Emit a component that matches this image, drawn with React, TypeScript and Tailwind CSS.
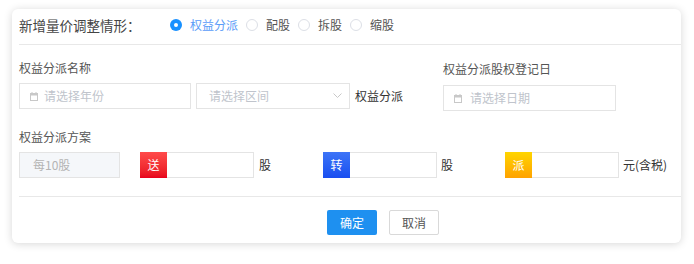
import React from "react";

const font = { fontFamily: '"Noto Sans CJK SC", "Noto Sans", sans-serif' };

function Radio({ checked, label }: { checked?: boolean; label: string }) {
  return (
    <div className="flex items-center">
      {checked ? (
        <span className="w-[12px] h-[12px] rounded-full bg-[#1890ff] flex items-center justify-center">
          <span className="w-[4px] h-[4px] rounded-full bg-white" />
        </span>
      ) : (
        <span className="w-[12px] h-[12px] rounded-full border border-[#dcdfe6] bg-white" />
      )}
      <span className={`ml-[8px] text-[12px] leading-[16px] ${checked ? "text-[#5a9cf8]" : "text-[#555]"}`}>{label}</span>
    </div>
  );
}

function CalIcon() {
  return (
    <svg width="8" height="9" viewBox="0 0 8 9" className="shrink-0">
      <rect x="0.5" y="1.5" width="7" height="7" fill="none" stroke="#c8c8c8" strokeWidth="1" />
      <rect x="0.5" y="1.5" width="7" height="2" fill="#c8c8c8" />
      <line x1="2" y1="0" x2="2" y2="2" stroke="#c8c8c8" />
      <line x1="6" y1="0" x2="6" y2="2" stroke="#c8c8c8" />
    </svg>
  );
}

function Prefixed({ label, cls }: { label: string; cls: string }) {
  return (
    <div className="flex h-[26px] w-[114px] border border-[#e4e4e4] bg-white">
      <div className={`w-[27px] -my-[1px] -ml-[1px] h-[26px] flex items-center justify-center text-white text-[12px] ${cls}`}>{label}</div>
    </div>
  );
}

export default function App() {
  return (
    <div className="w-[694px] h-[264px] bg-white pt-[9px] pl-[12px]" style={font}>
      <div className="w-[669px] h-[234px] bg-white rounded-[6px] shadow-[0_1px_8px_rgba(0,0,0,0.16)] flex flex-col">
        {/* header */}
        <div className="h-[35px] pb-[3px] pl-[7px] flex items-center">
          <span className="w-[151px] text-[13.5px] text-[#444] leading-[16px]">新增量价调整情形：</span>
          <div className="flex items-center gap-[8px]">
            <Radio checked label="权益分派" />
            <Radio label="配股" />
            <Radio label="拆股" />
            <Radio label="缩股" />
          </div>
        </div>
        <div className="ml-[7px] h-[1px] bg-[#e8e8e8]" />

        {/* section 1 */}
        <div className="pl-[7px] h-[64px] flex items-start">
          <div className="w-[424px] flex flex-col">
            <div className="mt-[15px] text-[12px] leading-[16px] text-[#555]">权益分派名称</div>
            <div className="mt-[7px] flex items-center">
              <div className="w-[172px] h-[26px] border border-[#e4e4e4] flex items-center pl-[10px]">
                <CalIcon />
                <span className="ml-[6px] text-[12px] text-[#c0c4cc]">请选择年份</span>
              </div>
              <div className="ml-[5px] w-[154px] h-[26px] border border-[#e4e4e4] flex items-center justify-between pl-[12px] pr-[7px]">
                <span className="text-[12px] text-[#c0c4cc]">请选择区间</span>
                <svg width="9" height="6" viewBox="0 0 9 6">
                  <polyline points="0.5,0.5 4.5,4.5 8.5,0.5" fill="none" stroke="#c8c8c8" strokeWidth="1" />
                </svg>
              </div>
              <span className="ml-[5px] text-[12px] text-[#333]">权益分派</span>
            </div>
          </div>
          <div className="flex flex-col">
            <div className="mt-[16px] text-[12px] leading-[16px] text-[#555]">权益分派股权登记日</div>
            <div className="mt-[8px] w-[173px] h-[26px] border border-[#e4e4e4] flex items-center pl-[10px]">
              <CalIcon />
              <span className="ml-[8px] text-[12px] text-[#c0c4cc]">请选择日期</span>
            </div>
          </div>
        </div>

        {/* section 2 */}
        <div className="pl-[7px] flex flex-col">
          <div className="mt-[20px] text-[12px] leading-[16px] text-[#555]">权益分派方案</div>
          <div className="mt-[7px] flex items-center">
            <div className="w-[101px] h-[26px] border border-[#e4e4e4] bg-[#f5f7fa] flex items-center pl-[13px] text-[12px] text-[#b4b4b4]">每10股</div>
            <div className="ml-[20px]">
              <Prefixed label="送" cls="bg-gradient-to-b from-[#ff4a4a] to-[#e8001c]" />
            </div>
            <span className="ml-[5px] text-[12px] text-[#333]">股</span>
            <div className="ml-[52px]">
              <Prefixed label="转" cls="bg-gradient-to-b from-[#3d74f7] to-[#1a4ef0]" />
            </div>
            <span className="ml-[4px] text-[12px] text-[#333]">股</span>
            <div className="ml-[52px]">
              <Prefixed label="派" cls="bg-gradient-to-b from-[#ffd500] to-[#ffa200]" />
            </div>
            <span className="ml-[4px] text-[12px] text-[#333]">元(含税)</span>
          </div>
        </div>

        <div className="ml-[7px] mt-[18px] h-[1px] bg-[#e8e8e8]" />

        <div className="mt-[13px] flex gap-[12px] ml-[315px]">
          <button className="w-[50px] h-[25px] rounded-[2px] bg-[#1e90f0] text-white text-[12px]">确定</button>
          <button className="w-[50px] h-[25px] rounded-[2px] border border-[#d9d9d9] bg-white text-[#555] text-[12px]">取消</button>
        </div>
      </div>
    </div>
  );
}
